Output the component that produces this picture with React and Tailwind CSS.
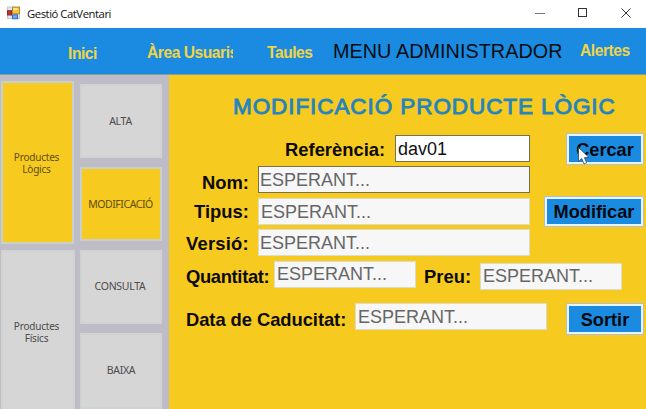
import React from "react";

const navItem = "block h-5 overflow-hidden whitespace-nowrap text-[15.6px] font-bold leading-5 tracking-[-0.45px] text-[#f0d448]";

function Label({ className, children }) {
  return (
    <label className={`block h-5 shrink-0 whitespace-nowrap pl-px text-[18.4px] font-bold leading-5 text-[#0d0b08] ${className}`}>
      {children}
    </label>
  );
}

function Field({ className, children }) {
  return (
    <div className={`box-border h-[27px] shrink-0 whitespace-nowrap border text-[18px] leading-5 ${className}`}>
      {children}
    </div>
  );
}

const idle = "border-[#dcdccb] bg-[#f7f7f7] text-[#666666]";

function Button({ className, children }) {
  return (
    <button className={`box-border block shrink-0 border border-[#b5bfc4] bg-[#e9f5fc] p-[2px] ${className}`}>
      <span className="block h-full whitespace-nowrap bg-[#1a8be0] text-center text-[18.2px] font-bold leading-5 text-[#05090f]">
        {children}
      </span>
    </button>
  );
}

function Tile({ active, className, children }) {
  return (
    <div
      className={`box-border flex shrink-0 items-center justify-center border-2 text-center font-['Noto_Sans','Open_Sans',sans-serif] ${
        active ? "border-[#c9d1c6] bg-[#f7ca20] text-[#5f4d10]" : "border-[#d1d3d3] bg-[#d6d6d6] text-[#4b4b4b]"
      } ${className}`}
    >
      {children}
    </div>
  );
}

function AppIcon() {
  return (
    <svg width="14" height="14" viewBox="0 0 14 14">
      <rect x="0.5" y="1" width="12" height="11.5" fill="#e4e5e8" stroke="#c4c6cc" />
      <rect x="5.5" y="1.2" width="7" height="6.5" fill="#f5c542" stroke="#b98a25" />
      <rect x="6.5" y="2" width="4" height="2" fill="#ffe592" />
      <rect x="0.5" y="4.7" width="4" height="4.3" fill="#bd3533" stroke="#8f292b" />
      <rect x="5.5" y="8.8" width="5" height="4" fill="#6caaf0" stroke="#3a6fbd" />
    </svg>
  );
}

function Cursor() {
  return (
    <svg className="absolute left-[11px] top-[13px]" width="14" height="20" viewBox="0 0 14 20">
      <path d="M1.5 1.5V15.5L4.8 12.5L7 18L9.6 16.8L7.4 11.6H12Z" fill="#fff" stroke="#26374a" strokeWidth="0.7" />
    </svg>
  );
}

export default function App() {
  return (
    <div className="flex h-[409px] w-[646px] flex-col overflow-hidden bg-white font-['Liberation_Sans',Arial,sans-serif]">
      <header className="flex h-7 shrink-0 items-start bg-white pl-[7px]">
        <div className="mt-[6px]"><AppIcon /></div>
        <span className="ml-[6px] mt-[4px] whitespace-nowrap font-['Open_Sans','Noto_Sans',sans-serif] text-[11.3px] leading-5 tracking-[-0.46px] text-[#111]">
          Gestió CatVentari
        </span>
        <svg className="ml-auto mr-[14px] mt-[7px]" width="98" height="12" viewBox="0 0 98 12" fill="none" stroke="#333">
          <path d="M1 6.5H11" stroke="#777" />
          <rect x="44.5" y="1.5" width="8" height="8" />
          <path d="M87.5 1.5L96.5 10.5M96.5 1.5L87.5 10.5" />
        </svg>
      </header>

      <nav className="flex h-[47px] shrink-0 items-start border-b border-[#7fa39c] bg-[#1a8be0]">
        <span className={`${navItem} ml-[68px] mt-[16px] w-[79px]`}>Inici</span>
        <span className={`${navItem} mt-[15px] w-[86px]`}>Àrea Usuaris</span>
        <span className={`${navItem} ml-[34px] mt-[15px] w-[66px]`}>Taules</span>
        <span className="mt-[13px] w-[247px] whitespace-nowrap text-[19.8px] leading-5 tracking-[0.05px] text-[#050b12]">MENU ADMINISTRADOR</span>
        <span className={`${navItem} mt-[13px]`}>Alertes</span>
      </nav>

      <div className="flex min-h-0 flex-1">
        <aside className="flex w-[169px] shrink-0 gap-[5px] overflow-hidden bg-[#bdbcc7] pl-px">
          <div className="flex w-[74px] flex-col gap-[6px] pt-[6px]">
            <Tile active className="h-[163px] w-[73px] pr-[2px] text-[10px] leading-[12px] tracking-[-0.2px]">Productes<br />Lògics</Tile>
            <Tile className="h-[163px] w-[74px] pr-[3px] text-[10px] leading-[12px] tracking-[-0.2px]">Productes<br />Físics</Tile>
          </div>
          <div className="flex w-[82px] flex-col gap-[9px] pt-[9px] text-[10.5px] tracking-[-0.3px]">
            <Tile className="h-[74px] pr-px pt-[2px]">ALTA</Tile>
            <Tile active className="h-[74px] pr-px pt-px tracking-[-0.45px]">MODIFICACIÓ</Tile>
            <Tile className="h-[74px] pr-[2px]">CONSULTA</Tile>
            <Tile className="h-[76px] pb-px">BAIXA</Tile>
          </div>
        </aside>

        <main className="flex flex-1 flex-col bg-[#f7ca20]">
          <h1 className="ml-[64px] mt-[20px] h-[38px] whitespace-nowrap text-[22.5px] font-normal leading-6 tracking-[0.92px] text-[#2584bd] [-webkit-text-stroke:0.9px_#2584bd]">
            MODIFICACIÓ PRODUCTE LÒGIC
          </h1>
          <div className="flex h-[33px] items-start">
            <Label className="ml-[115px] mt-[7px] w-[111px]">Referència:</Label>
            <Field className="mt-[2px] w-[135px] border-[#75704f] bg-white pl-[2px] pt-[3px] text-[#111]">dav01</Field>
            <div className="relative ml-[36px]">
              <Button className="h-[32px] w-[78px]"><span className="block pt-[4px]">Cercar</span></Button>
              <Cursor />
            </div>
          </div>
          <div className="flex h-[30px] items-start">
            <Label className="ml-[32px] mt-[7px] w-[57px]">Nom:</Label>
            <Field className="w-[272px] border-[#75704f] bg-[#f7f7f7] pl-px pt-[3px] text-[#666]">ESPERANT...</Field>
          </div>
          <div className="flex h-[33px] items-start">
            <Label className="ml-[24px] mt-[6px] w-[65px]">Tipus:</Label>
            <Field className={`${idle} mt-[2px] w-[272px] pl-[2px] pt-[3px]`}>ESPERANT...</Field>
            <Button className="ml-[14px] h-[31px] w-[100px]"><span className="block pt-[3px]">Modificar</span></Button>
          </div>
          <div className="flex h-[32px] items-start">
            <Label className="ml-[16px] mt-[5px] w-[73px] tracking-[0.2px]">Versió:</Label>
            <Field className={`${idle} w-[272px] pl-px pt-[3px]`}>ESPERANT...</Field>
          </div>
          <div className="flex h-[42px] items-start">
            <Label className="ml-[16px] mt-[6px] w-[89px] tracking-[-0.35px]">Quantitat:</Label>
            <Field className={`${idle} w-[142px] pl-[2px] pt-[2px]`}>ESPERANT...</Field>
            <Label className="ml-[7px] mt-[6px] w-[57px]">Preu:</Label>
            <Field className={`${idle} mt-[2px] w-[142px] pl-[2px] pt-[2px]`}>ESPERANT...</Field>
          </div>
          <div className="flex h-[33px] items-start">
            <Label className="ml-[16px] mt-[7px] w-[170px] tracking-[-0.07px]">Data de Caducitat:</Label>
            <Field className={`${idle} w-[192px] pl-[2px] pt-[3px]`}>ESPERANT...</Field>
            <Button className="ml-[19px] h-[32px] w-[78px]"><span className="block pt-[4px]">Sortir</span></Button>
          </div>
        </main>
      </div>
    </div>
  );
}
